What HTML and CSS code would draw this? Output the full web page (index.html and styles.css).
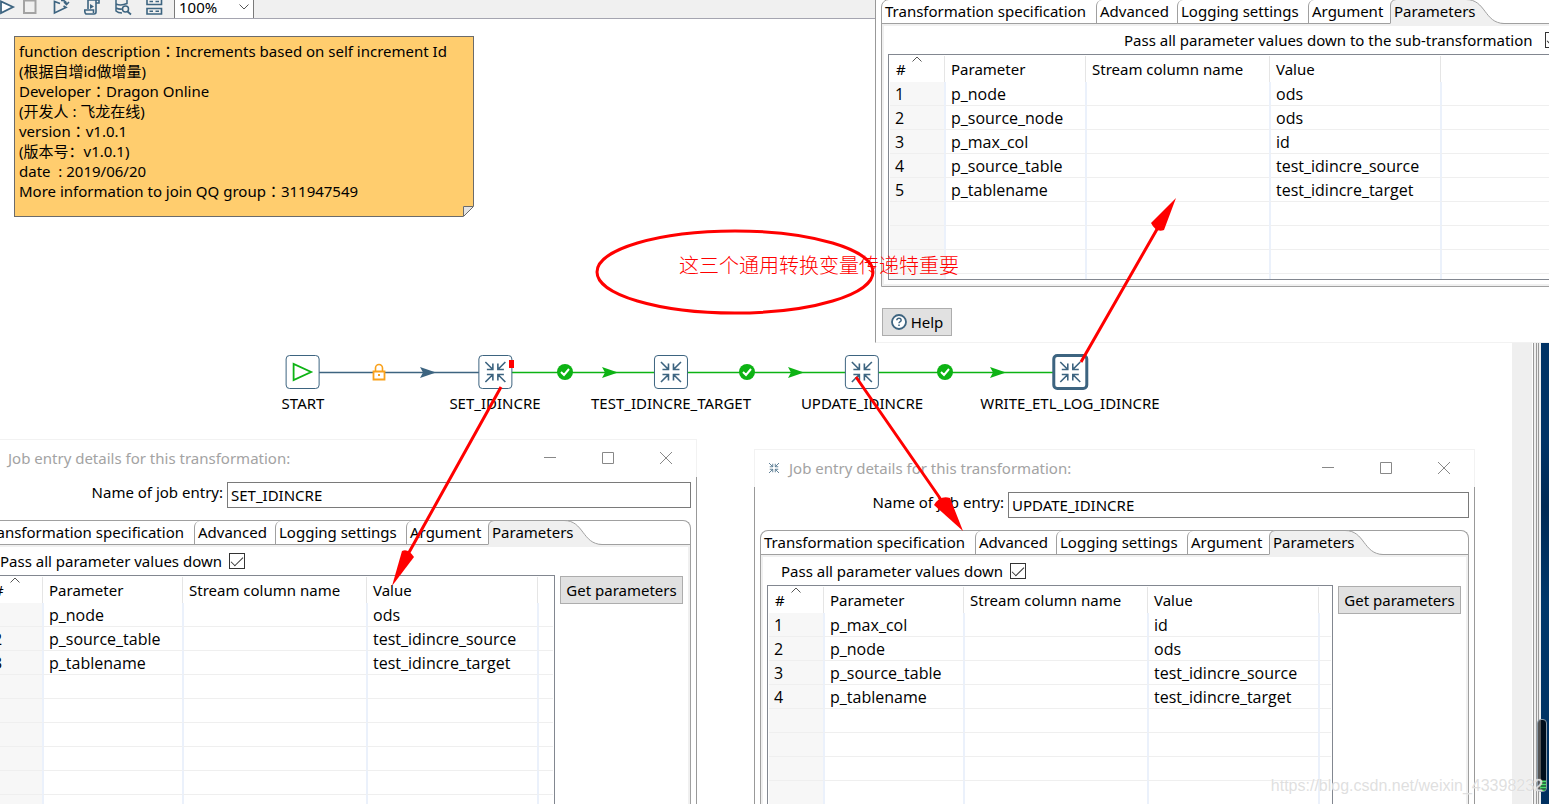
FILE: index.html
```
<!DOCTYPE html>
<html lang="en">
<head>
<meta charset="utf-8">
<title>Job designer</title>
<link rel="stylesheet" href="styles.css">
</head>
<body>
<svg class="defs" aria-hidden="true">
  <symbol id="transform" viewBox="0 0 24 24">
    <path d="M2 2l7 7M3.500 9.500h6v-6M22 2l-7 7M14.500 3.500v6h6M2 22l7-7M3.500 14.500h6v6M22 22l-7-7M20.500 14.500h-6v6" fill="none" stroke="#3d6480" stroke-width="1.600"/>
  </symbol>
  <symbol id="tab-shape" viewBox="0 0 116 25">
    <path d="M0.500 25V6Q1 1 6 0.500H76C96 0.500 94 24 114 24.500L114 25Z" fill="#f0f0f0"/>
    <path d="M0.500 24V6Q1 1 6 0.500H76C96 0.500 94 24 114 24.500" fill="none" stroke="#a0a0a0"/>
  </symbol>
  <symbol id="caret" viewBox="0 0 10 6"><path d="M0.500 5.500L5 1L9.500 5.500" fill="none" stroke="#555"/></symbol>
</svg>
<div class="desktop">
  <main class="app">
    <div class="toolbar">
      <button class="tool" aria-label="Run"><svg viewBox="0 0 18 18"><path d="M1 1.500V13L13 7Z" fill="#fff" stroke="#3d6480" stroke-width="1.800"/></svg></button>
      <button class="tool" aria-label="Stop"><svg viewBox="0 0 18 18"><path d="M1 0.500H12.500V13H1Z" fill="#f0f0f0" stroke="#a3a3a3" stroke-width="2"/></svg></button>
      <button class="tool" aria-label="Replay"><svg viewBox="0 0 18 18"><path d="M7 3.500L1.500 1.500V13L13 7.500L10.500 6" fill="none" stroke="#3d6480" stroke-width="1.700"/><path d="M8 0.500Q13 0 13.500 4M11 2L13.500 4.500L16 2" fill="none" stroke="#3d6480" stroke-width="1.600"/></svg></button>
      <button class="tool" aria-label="Check job"><svg viewBox="0 0 18 18"><path d="M4 9V0H15V3H12V12Q12 14 10 14H2Q0.500 13 0.800 10H9.500V13M12 0V3" fill="none" stroke="#3d6480" stroke-width="1.600"/><path d="M6 4V9L10 6.500Z" fill="#3d6480"/></svg></button>
      <button class="tool" aria-label="Explore database"><svg viewBox="0 0 18 18"><path d="M1 0V11Q3 13 7 13M1 4Q6 6 12 3.500V0M1 8Q4 9.500 7 9" fill="none" stroke="#3d6480" stroke-width="1.500"/><circle cx="10.500" cy="9" r="3" fill="#f0f0f0" stroke="#3d6480" stroke-width="1.500"/><path d="M12.500 11.500L16 14.500" stroke="#3d6480" stroke-width="1.800"/></svg></button>
      <button class="tool" aria-label="Results"><svg viewBox="0 0 18 18"><path d="M1 0V4.500H15.500V0M1 8.500H15.500V14H1ZM3.500 1.500H7M9.500 1.500H13M3.500 11.200H7M9.500 11.200H13" fill="none" stroke="#3d6480" stroke-width="1.600"/></svg></button>
      <div class="zoom">
        <select aria-label="Zoom"><option>100%</option></select>
        <svg viewBox="0 0 10 6"><path d="M0.500 0.500L5 5L9.500 0.500" fill="none" stroke="#555"/></svg>
      </div>
    </div>
    <div class="canvas">
      <div class="note">
        <p>function description<span class="colon">：</span>Increments based on self increment Id</p>
        <p lang="zh">(根据自增id做增量)</p>
        <p>Developer<span class="colon">：</span>Dragon Online</p>
        <p lang="zh">(开发人 : 飞龙在线)</p>
        <p>version<span class="colon">：</span>v1.0.1</p>
        <p lang="zh">(版本号<span class="colon">：</span>v1.0.1)</p>
        <p>date&nbsp; : 2019/06/20</p>
        <p>More information to join QQ group<span class="colon">：</span>311947549</p>
        <svg class="fold" viewBox="0 0 11 11"><path d="M0 0H11V11H0Z" fill="#fff"/><path d="M0.500 10.500V0.500H10.500Z" fill="#e4e4e4" stroke="#6b6b6b"/></svg>
      </div>
      <svg class="hops" width="1200" height="60" viewBox="0 0 1200 60">
        <g stroke-width="1.300"><path d="M303 30.500H495" stroke="#3d6480"/><path d="M495 30.500H1070" stroke="#0db314"/></g>
        <path d="M420 25L436 30.500L420 36L423 30.500Z" fill="#3d6480"/>
        <g fill="#0db314">
          <path d="M602 25L618 30.500L602 36L605 30.500ZM788 25L804 30.500L788 36L791 30.500ZM990 25L1006 30.500L990 36L993 30.500Z"/>
          <circle cx="565" cy="30" r="8"/><circle cx="747" cy="30" r="8"/><circle cx="945" cy="30" r="8"/>
        </g>
        <path d="M561 30L564 33L569 27M743 30L746 33L751 27M941 30L944 33L949 27" fill="none" stroke="#fff" stroke-width="2"/>
        <path d="M375.500 29V26a3.500 3.500 0 0 1 7 0V29" fill="none" stroke="#f9a11b" stroke-width="1.600"/>
        <path d="M373.500 29.500H384.500V37.500H373.500Z" fill="#fff" stroke="#f9a11b" stroke-width="1.800"/><path d="M378 32h2v2h-2z" fill="#f9a11b"/>
      </svg>
      <div class="node n-start"><span class="box"><svg viewBox="0 0 24 24"><path d="M3 4V20L20.500 12Z" fill="none" stroke="#0db314" stroke-width="1.800"/></svg></span><span>START</span></div>
      <div class="node n-set"><span class="box"><svg><use href="#transform"/></svg></span><span>SET_IDINCRE</span></div>
      <div class="node n-test"><span class="box"><svg><use href="#transform"/></svg></span><span>TEST_IDINCRE_TARGET</span></div>
      <div class="node n-update"><span class="box"><svg><use href="#transform"/></svg></span><span>UPDATE_IDINCRE</span></div>
      <div class="node n-write"><span class="box selected"><svg><use href="#transform"/></svg></span><span>WRITE_ETL_LOG_IDINCRE</span></div>
    </div>
  </main>
  <aside class="edge"><div class="gutter"></div><div class="frame"></div><div class="wallpaper"></div></aside>
  <div class="meter"><svg viewBox="0 0 10 73"><path d="M2 61.500H9M2 64.500H9M2 67.500H9M3 70.500H8" stroke="#4ade6a" stroke-width="1.800"/></svg></div>

  <section class="dialog d-log">
    <div class="folder">
      <div class="tabs" role="tablist">
        <button class="tab t-spec" role="tab">Transformation specification</button><button class="tab t-adv" role="tab">Advanced</button><button class="tab t-logging" role="tab">Logging settings</button><button class="tab t-arg" role="tab">Argument</button><button class="tab t-param" role="tab"><svg><use href="#tab-shape"/></svg><span>Parameters</span></button>
      </div>
      <div class="panel">
        <div class="pass"><label for="p1">Pass all parameter values down to the sub-transformation</label><input type="checkbox" id="p1" checked></div>
        <div class="split">
          <div class="grid">
            <table>
              <colgroup><col class="c-num"><col class="c-param"><col class="c-stream"><col class="c-value"><col></colgroup>
              <thead><tr><th>#<svg class="sort"><use href="#caret"/></svg></th><th>Parameter</th><th>Stream column name</th><th>Value</th><th></th></tr></thead>
              <tbody>
                <tr><td>1</td><td>p_node</td><td></td><td>ods</td><td></td></tr>
                <tr><td>2</td><td>p_source_node</td><td></td><td>ods</td><td></td></tr>
                <tr><td>3</td><td>p_max_col</td><td></td><td>id</td><td></td></tr>
                <tr><td>4</td><td>p_source_table</td><td></td><td>test_idincre_source</td><td></td></tr>
                <tr><td>5</td><td>p_tablename</td><td></td><td>test_idincre_target</td><td></td></tr>
                <tr><td></td><td></td><td></td><td></td><td></td></tr>
                <tr><td></td><td></td><td></td><td></td><td></td></tr>
                <tr><td></td><td></td><td></td><td></td><td></td></tr>
                <tr><td></td><td></td><td></td><td></td><td></td></tr>
              </tbody>
            </table>
          </div>
        </div>
      </div>
    </div>
    <button class="btn help"><svg viewBox="0 0 16 16"><circle cx="8" cy="8" r="7" fill="#fff" stroke="#3d6480" stroke-width="1.800"/><path d="M5.800 6.200Q6 4.200 8 4.200T10.200 6Q10.200 7.200 8.900 7.800Q8 8.300 8 9.300M8 10.500V12" fill="none" stroke="#3d6480" stroke-width="1.500"/></svg>Help</button>
  </section>

  <section class="dialog d-set">
    <header class="titlebar"><svg class="app-icon"><use href="#transform"/></svg><h2>Job entry details for this transformation:</h2>
      <button aria-label="Minimize"><svg viewBox="0 0 12 12"><path d="M0 5.500H12"/></svg></button><button aria-label="Maximize"><svg viewBox="0 0 12 12"><path d="M0.500 0.500H11.500V11.500H0.500Z"/></svg></button><button aria-label="Close"><svg viewBox="0 0 12 12"><path d="M0 0L12 12M12 0L0 12"/></svg></button></header>
    <div class="content">
      <div class="name"><label for="n2">Name of job entry:</label><input type="text" id="n2" value="SET_IDINCRE"></div>
      <div class="folder">
        <div class="tabs" role="tablist">
          <button class="tab t-spec" role="tab">Transformation specification</button><button class="tab t-adv" role="tab">Advanced</button><button class="tab t-logging" role="tab">Logging settings</button><button class="tab t-arg" role="tab">Argument</button><button class="tab t-param" role="tab"><svg><use href="#tab-shape"/></svg><span>Parameters</span></button>
        </div>
        <div class="panel">
          <div class="pass"><label for="p2">Pass all parameter values down</label><input type="checkbox" id="p2" checked></div>
          <div class="split">
            <div class="grid">
              <table>
                <colgroup><col class="c-num"><col class="c-param"><col class="c-stream"><col class="c-value"><col></colgroup>
                <thead><tr><th>#<svg class="sort"><use href="#caret"/></svg></th><th>Parameter</th><th>Stream column name</th><th>Value</th><th></th></tr></thead>
                <tbody>
                  <tr><td>1</td><td>p_node</td><td></td><td>ods</td><td></td></tr>
                  <tr><td>2</td><td>p_source_table</td><td></td><td>test_idincre_source</td><td></td></tr>
                  <tr><td>3</td><td>p_tablename</td><td></td><td>test_idincre_target</td><td></td></tr>
                  <tr><td></td><td></td><td></td><td></td><td></td></tr>
                  <tr><td></td><td></td><td></td><td></td><td></td></tr>
                  <tr><td></td><td></td><td></td><td></td><td></td></tr>
                  <tr><td></td><td></td><td></td><td></td><td></td></tr>
                  <tr><td></td><td></td><td></td><td></td><td></td></tr>
                  <tr><td></td><td></td><td></td><td></td><td></td></tr>
                </tbody>
              </table>
            </div>
            <button class="btn">Get parameters</button>
          </div>
        </div>
      </div>
    </div>
  </section>

  <section class="dialog d-update">
    <header class="titlebar"><svg class="app-icon"><use href="#transform"/></svg><h2>Job entry details for this transformation:</h2>
      <button aria-label="Minimize"><svg viewBox="0 0 12 12"><path d="M0 5.500H12"/></svg></button><button aria-label="Maximize"><svg viewBox="0 0 12 12"><path d="M0.500 0.500H11.500V11.500H0.500Z"/></svg></button><button aria-label="Close"><svg viewBox="0 0 12 12"><path d="M0 0L12 12M12 0L0 12"/></svg></button></header>
    <div class="content">
      <div class="name"><label for="n3">Name of job entry:</label><input type="text" id="n3" value="UPDATE_IDINCRE"></div>
      <div class="folder">
        <div class="tabs" role="tablist">
          <button class="tab t-spec" role="tab">Transformation specification</button><button class="tab t-adv" role="tab">Advanced</button><button class="tab t-logging" role="tab">Logging settings</button><button class="tab t-arg" role="tab">Argument</button><button class="tab t-param" role="tab"><svg><use href="#tab-shape"/></svg><span>Parameters</span></button>
        </div>
        <div class="panel">
          <div class="pass"><label for="p3">Pass all parameter values down</label><input type="checkbox" id="p3" checked></div>
          <div class="split">
            <div class="grid">
              <table>
                <colgroup><col class="c-num"><col class="c-param"><col class="c-stream"><col class="c-value"><col></colgroup>
                <thead><tr><th>#<svg class="sort"><use href="#caret"/></svg></th><th>Parameter</th><th>Stream column name</th><th>Value</th><th></th></tr></thead>
                <tbody>
                  <tr><td>1</td><td>p_max_col</td><td></td><td>id</td><td></td></tr>
                  <tr><td>2</td><td>p_node</td><td></td><td>ods</td><td></td></tr>
                  <tr><td>3</td><td>p_source_table</td><td></td><td>test_idincre_source</td><td></td></tr>
                  <tr><td>4</td><td>p_tablename</td><td></td><td>test_idincre_target</td><td></td></tr>
                  <tr><td></td><td></td><td></td><td></td><td></td></tr>
                  <tr><td></td><td></td><td></td><td></td><td></td></tr>
                  <tr><td></td><td></td><td></td><td></td><td></td></tr>
                  <tr><td></td><td></td><td></td><td></td><td></td></tr>
                </tbody>
              </table>
            </div>
            <button class="btn">Get parameters</button>
          </div>
        </div>
      </div>
    </div>
  </section>

  <svg class="marks" width="1200" height="620" viewBox="0 0 1200 620">
    <g fill="none" stroke="#f00" stroke-width="3">
      <ellipse cx="735" cy="272" rx="138" ry="41"/>
      <path d="M501 387L407 556M856 377L944 504M1081 362L1160 224"/>
    </g>
    <g fill="#f00">
      <path d="M392 586L402 551Q408 548 414 557Z"/>
      <path d="M963 531L934 505Q940 495 950 498Z"/>
      <path d="M1176 198L1151 223Q1156 233 1164 230Z"/>
      <path d="M509 360h5v8h-5z"/>
    </g>
  </svg>
  <p class="remark" lang="zh">这三个通用转换变量传递特重要</p>
  <p class="watermark">https://blog.csdn.net/weixin_43398232</p>
</div>
</body>
</html>
```
FILE: styles.css
```
* { box-sizing: border-box; }
body, p, h2 { margin: 0; }
body, button, input, select {
  font-family: "Noto Sans", "Noto Sans CJK SC", sans-serif;
  font-size: 15px;
  line-height: 20px;
  color: #000;
}
button { padding: 0; border: 0; background: none; white-space: nowrap; }
.defs { position: absolute; width: 0; height: 0; }
.desktop { position: relative; display: flex; height: 100vh; overflow: hidden; background: #fff; }

/* main window */
.app { flex: 1; display: flex; flex-direction: column; min-width: 0; }
.toolbar {
  display: flex; align-items: flex-start; height: 19px; overflow: hidden;
  background: #f0f0f0; border-bottom: 1px solid #a5a5b0;
}
.tool { width: 31px; height: 18px; text-align: left; }
.tool:first-child { width: 23px; }
.tool:nth-child(2) { width: 30px; }
.tool svg { display: block; width: 18px; height: 18px; }
.zoom { position: relative; margin-left: -3px; }
.zoom select {
  display: block; appearance: none; width: 80px; height: 18px; padding: 0 0 4px 4px;
  line-height: 14px; border: 1px solid #7a7a7a; border-width: 0 1px; border-radius: 0; background: #fff;
}
.zoom svg { position: absolute; right: 5px; top: 4px; width: 10px; height: 6px; }
.canvas { position: relative; flex: 1; }
.note {
  position: absolute; left: 14px; top: 17px; width: 460px; padding: 4px 4px 15px;
  border: 1px solid #6b6b6b; background: #ffcd6e; white-space: nowrap;
}
.note p { height: 20px; }
.colon { font-family: "Noto Sans CJK TC", sans-serif; line-height: 1; }
.fold { position: absolute; right: -1px; bottom: -1px; width: 11px; height: 11px; }
.hops { position: absolute; left: 0; top: 323px; }
.node {
  position: absolute; top: 336px; display: flex; flex-direction: column; align-items: center; gap: 4px;
  transform: translateX(-50%); white-space: nowrap;
}
.n-start { left: 303px; }
.n-set { left: 495px; }
.n-test { left: 671px; }
.n-update { left: 862px; }
.n-write { left: 1070px; }
.box {
  display: grid; place-items: center; width: 34px; height: 34px;
  border: 1px solid #3d6480; border-radius: 4px; background: #fff;
}
.box svg { width: 24px; height: 24px; }
.selected { outline: 2px solid #3d6480; outline-offset: -1px; border-width: 2px; }

/* right edge of the screen */
.edge { display: flex; width: 37px; }
.gutter { width: 20px; background: #efefef; }
.frame {
  width: 9px;
  background: linear-gradient(90deg, #fff 1px, #999 1px 2px, #efefef 2px 4px, #999 4px 5px, #efefef 5px 6px, #999 6px 7px, #efefef 7px);
}
.wallpaper { width: 8px; background: linear-gradient(#003566, #003366 55%, #002a55 63%, #00386b 75%, #003060); }
.meter {
  position: absolute; right: 2px; bottom: 12px; width: 10px; height: 73px; overflow: hidden;
  border-radius: 4px; background: linear-gradient(90deg, #555 3px, #000e1c 3px); border: 1px solid #8a9aa8;
}
.meter svg { display: block; width: 10px; height: 73px; }

/* dialogs */
.dialog { position: absolute; overflow: hidden; background: #fff; }
.d-log { left: 875px; top: -1px; width: 740px; height: 344px; padding-left: 5px; border: 1px solid #f2f2f2; border-left-color: #999; border-top: 0; }
.d-set { left: -27px; top: 439px; width: 724px; bottom: 0; display: flex; flex-direction: column; }
.d-update { left: 754px; top: 449px; width: 721px; bottom: 0; display: flex; flex-direction: column; }
.titlebar {
  display: flex; align-items: center; height: 38px; padding: 0 24px 2px 13px;
  border: 1px solid #f2f2f2; border-bottom: 0;
}
.app-icon { width: 12px; height: 12px; margin-right: 9px; }
.titlebar h2 { flex: 1; font-size: 15px; font-weight: 400; color: #a3a3a3; }
.titlebar button { width: 12px; margin-left: 46px; }
.titlebar button svg { display: block; width: 12px; height: 12px; fill: none; stroke: #888; }
.content {
  flex: 1; min-height: 0; display: flex; flex-direction: column; gap: 12px;
  padding: 5px 5px 0; border: 1px solid #999; border-width: 0 1px;
}
.name { display: grid; grid-template-columns: 248px 1fr; }
.name label { text-align: right; padding-right: 4px; }
.name input { height: 26px; min-width: 0; padding: 0 3px; border: 1px solid #7a7a7a; }
.folder { border: 1px solid #a0a0a0; border-bottom: 0; border-radius: 8px 8px 0 0; }
.content .folder { flex: 1; min-height: 0; display: flex; flex-direction: column; }
.d-log .folder { border-bottom: 1px solid #a0a0a0; }
.tabs { display: flex; flex: none; height: 24px; border-bottom: 1px solid #a0a0a0; }
.tab { height: 23px; padding: 0 0 1px 3px; text-align: left; border-left: 1px solid #a0a0a0; border-top-left-radius: 6px; }
.t-spec { width: 214px; border-left: 0; }
.t-adv { width: 81px; }
.t-logging { width: 131px; }
.t-arg { width: 82px; }
.t-param { position: relative; width: 114px; padding-left: 4px; border: 0; border-radius: 0; }
.t-param svg { position: absolute; left: 0; top: -1px; width: 116px; height: 25px; }
.t-param span { position: relative; }
.panel { border: 2px solid #f0f0f0; border-bottom: 0; }
.content .panel { flex: 1; min-height: 0; display: flex; flex-direction: column; }
.d-log .panel { border-bottom: 2px solid #f0f0f0; padding-bottom: 4px; }
.pass { display: flex; align-items: center; gap: 7px; height: 28px; padding-left: 18px; }
.d-log .pass { padding-left: 240px; gap: 12px; }
.pass label { white-space: nowrap; }
.pass input { appearance: none; flex: none; width: 16px; height: 16px; margin: 0; border: 1px solid #333; }
.pass input:checked { display: grid; place-items: center; }
.pass input:checked::before {
  content: ""; width: 11px; height: 5px; margin-bottom: 3px;
  border: 1px solid #333; border-width: 0 0 1px 1px; transform: rotate(-45deg);
}
.split { display: flex; align-items: flex-start; gap: 5px; padding: 0 5px 0 4px; }
.content .split { flex: 1; min-height: 0; }
.grid { flex: 1; min-width: 0; overflow: hidden; padding: 1px; border: 1px solid #828790; }
.content .grid { align-self: stretch; border-bottom: 0; }
.d-log .grid { height: 226px; }
table { width: 100%; table-layout: fixed; border-spacing: 0; }
.c-num { width: 54px; }
.c-param { width: 140px; }
.d-log .c-param { width: 141px; }
.c-stream { width: 184px; }
.c-value { width: 171px; }
th { position: relative; height: 26px; padding: 0 0 0 6px; border-left: 1px solid #e5e5e5; font-weight: 400; text-align: left; white-space: nowrap; }
td {
  height: 24px; padding: 0 0 0 5px; border-left: 2px solid #ebf1fb; border-bottom: 1px solid #efefef;
  font-family: "Open Sans", sans-serif; font-size: 16px; white-space: nowrap;
}
th:first-child, td:first-child { border-left: 0; }
td:first-child { background: #f7f7f7; }
.sort { position: absolute; left: 22px; top: 0; width: 10px; height: 6px; }
.btn { height: 28px; margin-top: 1px; border: 1px solid #adadad; background: #e1e1e1; }
.split .btn { width: 123px; }
.help { display: flex; align-items: center; justify-content: center; gap: 4px; width: 70px; margin: 21px 0 0 1px; }
.help svg { width: 16px; height: 16px; }

/* red pen marks and watermark */
.marks { position: absolute; left: 0; top: 0; pointer-events: none; }
.remark {
  position: absolute; left: 679px; top: 253px; font-family: "Noto Sans CJK SC", sans-serif;
  font-size: 20px; line-height: 24px; font-weight: 300; color: #f00; white-space: nowrap;
}
.watermark {
  position: absolute; right: 6px; bottom: 8px; font-family: "Liberation Sans", sans-serif; font-size: 16px;
  color: rgba(215, 215, 215, 0.8); text-shadow: 0 0 1px #fff;
}
```
